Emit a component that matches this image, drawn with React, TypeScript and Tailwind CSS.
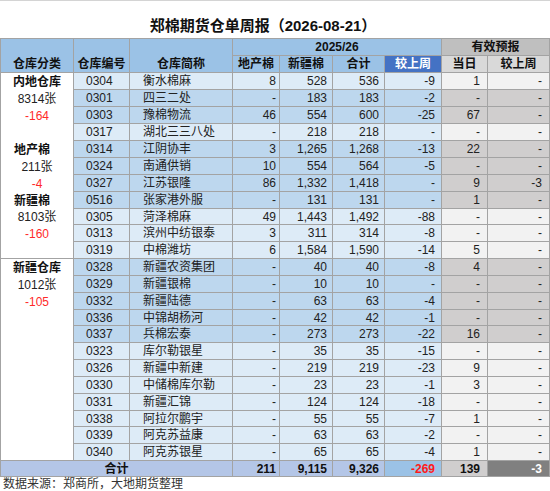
import React from "react";

type Row = [string, string, string, string, string, string, string, string, boolean];

const rows: Row[] = [
  ["0304", "衡水棉麻", "8", "528", "536", "-9", "1", "-", false],
  ["0301", "四三二处", "-", "183", "183", "-2", "-", "-", true],
  ["0303", "豫棉物流", "46", "554", "600", "-25", "67", "-", true],
  ["0317", "湖北三三八处", "-", "218", "218", "-", "-", "-", false],
  ["0314", "江阴协丰", "3", "1,265", "1,268", "-13", "22", "-", true],
  ["0324", "南通供销", "10", "554", "564", "-5", "-", "-", true],
  ["0327", "江苏银隆", "86", "1,332", "1,418", "-", "9", "-3", true],
  ["0516", "张家港外服", "-", "131", "131", "-", "1", "-", true],
  ["0305", "菏泽棉麻", "49", "1,443", "1,492", "-88", "-", "-", false],
  ["0313", "滨州中纺银泰", "3", "311", "314", "-8", "-", "-", false],
  ["0319", "中棉潍坊", "6", "1,584", "1,590", "-14", "5", "-", false],
  ["0328", "新疆农资集团", "-", "40", "40", "-8", "4", "-", true],
  ["0329", "新疆银棉", "-", "10", "10", "-", "-", "-", true],
  ["0332", "新疆陆德", "-", "63", "63", "-4", "-", "-", true],
  ["0336", "中锦胡杨河", "-", "42", "42", "-1", "-", "-", true],
  ["0337", "兵棉宏泰", "-", "273", "273", "-22", "16", "-", true],
  ["0323", "库尔勒银星", "-", "35", "35", "-15", "-", "-", false],
  ["0326", "新疆中新建", "-", "219", "219", "-23", "9", "-", false],
  ["0330", "中储棉库尔勒", "-", "23", "23", "-1", "3", "-", false],
  ["0331", "新疆汇锦", "-", "124", "124", "-18", "-", "-", false],
  ["0338", "阿拉尔鹏宇", "-", "55", "55", "-7", "1", "-", false],
  ["0339", "阿克苏益康", "-", "63", "63", "-2", "-", "-", false],
  ["0340", "阿克苏银星", "-", "65", "65", "-4", "1", "-", false],
];

type Left = { text: string; kind: "bold" | "boldLeft" | "num" | "red" | "blank" };
const left: Left[] = [
  { text: "内地仓库", kind: "bold" },
  { text: "8314张", kind: "num" },
  { text: "-164", kind: "red" },
  { text: "", kind: "blank" },
  { text: "地产棉", kind: "boldLeft" },
  { text: "211张", kind: "num" },
  { text: "-4", kind: "red" },
  { text: "新疆棉", kind: "boldLeft" },
  { text: "8103张", kind: "num" },
  { text: "-160", kind: "red" },
  { text: "", kind: "blank" },
  { text: "新疆仓库", kind: "bold" },
  { text: "1012张", kind: "num" },
  { text: "-105", kind: "red" },
  { text: "", kind: "blank" },
  { text: "", kind: "blank" },
  { text: "", kind: "blank" },
  { text: "", kind: "blank" },
  { text: "", kind: "blank" },
  { text: "", kind: "blank" },
  { text: "", kind: "blank" },
  { text: "", kind: "blank" },
  { text: "", kind: "blank" },
];

const cellBase = "border-r border-b border-[#a3a3a3] flex items-center overflow-hidden whitespace-nowrap";

function LeftCell({ item, idx }: { item: Left; idx: number }) {
  const groupEnd = idx === 10 || idx === 22;
  const border = groupEnd
    ? "border-r border-b border-[#a3a3a3]"
    : "border-r border-[#a3a3a3]";
  let cls = "justify-center text-[#222]";
  if (item.kind === "bold") cls = "justify-center font-bold text-[#111]";
  if (item.kind === "boldLeft") cls = "justify-start pl-[13px] font-bold text-[#111]";
  if (item.kind === "red") cls = "justify-center text-[#ff2a2a]";
  return (
    <div className={`${border} bg-white flex items-center overflow-hidden whitespace-nowrap ${cls}`}>
      {item.text}
    </div>
  );
}

export default function App() {
  return (
    <div
      className="w-[550px] h-[491px] bg-white text-[12px] text-[#222] overflow-hidden"
      style={{ fontFamily: '"Liberation Sans", "Noto Sans CJK SC", sans-serif' }}
    >
      <div className="h-[38px] border-t border-[#d4d4d4] flex items-center justify-center pt-[12px] pr-[24px] text-[15px] font-bold text-[#111] leading-none">
        郑棉期货仓单周报（2026-08-21）
      </div>
      <div className="grid grid-cols-[73px_56px_103px_47px_53px_52px_57px_46px_62px] grid-rows-[17px_17px_17px_17px_17px_17px_17px_17px_17px_17px_16px_17px_17px_17px_17px_17px_16px_17px_17px_17px_17px_17px_16px_17px_17px_16px] border-l border-t border-[#a3a3a3] leading-none">
        {/* header */}
        <div className={`${cellBase} row-span-2 bg-[#9BC2E6] justify-center items-end pb-[2px] font-bold text-[#111]`}>仓库分类</div>
        <div className={`${cellBase} row-span-2 bg-[#9BC2E6] justify-center items-end pb-[2px] font-bold text-[#111]`}>仓库编号</div>
        <div className={`${cellBase} row-span-2 bg-[#9BC2E6] justify-center items-end pb-[2px] font-bold text-[#111]`}>仓库简称</div>
        <div className={`${cellBase} col-span-4 bg-[#9BC2E6] justify-center font-bold text-[#111]`}>2025/26</div>
        <div className={`${cellBase} col-span-2 bg-[#BFBFBF] justify-center font-bold text-[#111]`}>有效预报</div>
        <div className={`${cellBase} bg-[#9BC2E6] justify-center font-bold text-[#111]`}>地产棉</div>
        <div className={`${cellBase} bg-[#9BC2E6] justify-center font-bold text-[#111]`}>新疆棉</div>
        <div className={`${cellBase} bg-[#9BC2E6] justify-center font-bold text-[#111]`}>合计</div>
        <div className={`${cellBase} bg-[#4472C4] justify-center font-bold text-white`}>较上周</div>
        <div className={`${cellBase} bg-[#D9D9D9] justify-center font-bold text-[#111]`}>当日</div>
        <div className={`${cellBase} bg-[#D9D9D9] justify-center font-bold text-[#111]`}>较上周</div>

        {rows.map((r, i) => {
          const blue = r[8] ? "bg-[#BDD7EE]" : "bg-[#DDEBF7]";
          const gray = r[8] ? "bg-[#D0CECE]" : "bg-[#F2F2F2]";
          return (
            <React.Fragment key={r[0]}>
              <LeftCell item={left[i]} idx={i} />
              <div className={`${cellBase} ${blue} justify-start pl-[12px]`}>{r[0]}</div>
              <div className={`${cellBase} ${blue} justify-start pl-[13px]`}>{r[1]}</div>
              <div className={`${cellBase} ${blue} justify-end pr-[3px]`}>{r[2]}</div>
              <div className={`${cellBase} ${blue} justify-end pr-[5px]`}>{r[3]}</div>
              <div className={`${cellBase} ${blue} justify-end pr-[5px]`}>{r[4]}</div>
              <div className={`${cellBase} ${blue} justify-end pr-[6px]`}>{r[5]}</div>
              <div className={`${cellBase} ${gray} justify-end pr-[7px]`}>{r[6]}</div>
              <div className={`${cellBase} ${gray} justify-end pr-[7px]`}>{r[7]}</div>
            </React.Fragment>
          );
        })}

        {/* total */}
        <div className={`${cellBase} col-span-3 bg-[#B4C6E7] justify-center font-bold text-[#111]`}>合计</div>
        <div className={`${cellBase} bg-[#B4C6E7] justify-end pr-[3px] font-bold text-[#111]`}>211</div>
        <div className={`${cellBase} bg-[#B4C6E7] justify-end pr-[5px] font-bold text-[#111]`}>9,115</div>
        <div className={`${cellBase} bg-[#B4C6E7] justify-end pr-[5px] font-bold text-[#111]`}>9,326</div>
        <div className={`${cellBase} bg-[#9BC2E6] justify-end pr-[6px] font-bold text-[#ff1a1a]`}>-269</div>
        <div className={`${cellBase} bg-[#D0CECE] justify-end pr-[7px] font-bold text-[#111]`}>139</div>
        <div className={`${cellBase} bg-[#808080] justify-end pr-[7px] font-bold text-white`}>-3</div>
      </div>
      <div className="h-[15px] pl-[3px] text-[12px] leading-[15px] text-[#333]">数据来源：郑商所，大地期货整理</div>
    </div>
  );
}
